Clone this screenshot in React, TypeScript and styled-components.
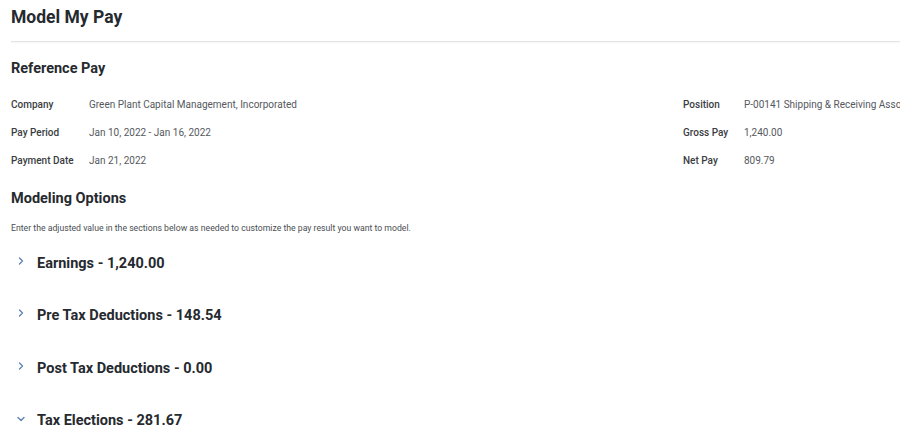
import styled, { createGlobalStyle } from 'styled-components';

const GlobalStyle = createGlobalStyle`
  html, body {
    margin: 0;
    padding: 0;
    background: #ffffff;
    overflow: hidden;
  }
  body {
    font-family: "Roboto", "Liberation Sans", sans-serif;
    color: #333333;
  }
`;

const summaryLeft = [
  { label: 'Company', value: 'Green Plant Capital Management, Incorporated' },
  { label: 'Pay Period', value: 'Jan 10, 2022 - Jan 16, 2022' },
  { label: 'Payment Date', value: 'Jan 21, 2022' },
];

const summaryRight = [
  { label: 'Position', value: 'P-00141 Shipping & Receiving Associate' },
  { label: 'Gross Pay', value: '1,240.00' },
  { label: 'Net Pay', value: '809.79' },
];

const sections = [
  { title: 'Earnings - 1,240.00', open: false },
  { title: 'Pre Tax Deductions - 148.54', open: false },
  { title: 'Post Tax Deductions - 0.00', open: false },
  { title: 'Tax Elections - 281.67', open: true },
];

function Chevron({ open }: { open: boolean }) {
  return (
    <ChevronIcon viewBox="0 0 10 10" open={open}>
      <path d="M3.5 2 L6.5 5 L3.5 8" fill="none" stroke="#5b7fb5" strokeWidth="1.3" strokeLinecap="round" strokeLinejoin="round" />
    </ChevronIcon>
  );
}

function App() {
  return (
    <Page>
      <GlobalStyle />
      <PageHeader>
        <Title>Model My Pay</Title>
      </PageHeader>

      <SectionTitle>Reference Pay</SectionTitle>
      <Summary>
        <FieldList>
          {summaryLeft.map((f) => (
            <Field key={f.label}>
              <Label width="78px">{f.label}</Label>
              <Value>{f.value}</Value>
            </Field>
          ))}
        </FieldList>
        <FieldList>
          {summaryRight.map((f) => (
            <Field key={f.label}>
              <Label width="61px">{f.label}</Label>
              <Value>{f.value}</Value>
            </Field>
          ))}
        </FieldList>
      </Summary>

      <OptionsTitle>Modeling Options</OptionsTitle>
      <Hint>Enter the adjusted value in the sections below as needed to customize the pay result you want to model.</Hint>

      <Accordion>
        {sections.map((s) => (
          <AccordionItem key={s.title}>
            <Chevron open={s.open} />
            <AccordionTitle>{s.title}</AccordionTitle>
          </AccordionItem>
        ))}
      </Accordion>
    </Page>
  );
}

const Page = styled.div`
  width: 900px;
  height: 437px;
  box-sizing: border-box;
  padding-left: 11px;
  overflow: hidden;
  white-space: nowrap;
`;

const PageHeader = styled.div`
  padding-top: 5px;
  height: 42px;
  box-sizing: border-box;
  border-bottom: 1px solid #e4e4e4;
  box-shadow: 0 1px 1px rgba(0, 0, 0, 0.03);
`;

const Title = styled.h1`
  margin: 0;
  font-size: 17.5px;
  line-height: 24px;
  font-weight: 700;
  color: #262a2f;
`;

const SectionTitle = styled.h2`
  margin: 17px 0 0 0;
  font-size: 14.5px;
  line-height: 20px;
  font-weight: 700;
  color: #262a2f;
`;

const Summary = styled.div`
  display: grid;
  grid-template-columns: 672px 1fr;
  margin-top: 18px;
`;

const FieldList = styled.div`
  display: flex;
  flex-direction: column;
  gap: 14px;
`;

const Field = styled.div`
  display: flex;
  align-items: center;
  height: 14px;
  font-size: 10px;
`;

const Label = styled.span<{ width: string }>`
  width: ${(p) => p.width};
  flex-shrink: 0;
  font-weight: 500;
  color: #3a3d42;
`;

const Value = styled.span`
  color: #55595e;
`;

const OptionsTitle = styled.h2`
  margin: 22px 0 0 0;
  font-size: 14.5px;
  line-height: 20px;
  font-weight: 700;
  color: #262a2f;
`;

const Hint = styled.p`
  margin: 13px 0 0 0;
  font-size: 8.7px;
  line-height: 12px;
  color: #4a4e53;
`;

const Accordion = styled.div`
  display: flex;
  flex-direction: column;
  gap: 32px;
  margin-top: 19px;
  padding-left: 5px;
`;

const AccordionItem = styled.div`
  display: flex;
  align-items: center;
  height: 20.5px;
`;

const ChevronIcon = styled.svg<{ open: boolean }>`
  width: 10px;
  height: 10px;
  margin-right: 11px;
  transform: ${(p) => (p.open ? 'rotate(90deg)' : 'none')};
  margin-top: ${(p) => (p.open ? '-4px' : '-5px')};
`;

const AccordionTitle = styled.span`
  font-size: 14.5px;
  font-weight: 700;
  color: #262a2f;
`;

export default App;
